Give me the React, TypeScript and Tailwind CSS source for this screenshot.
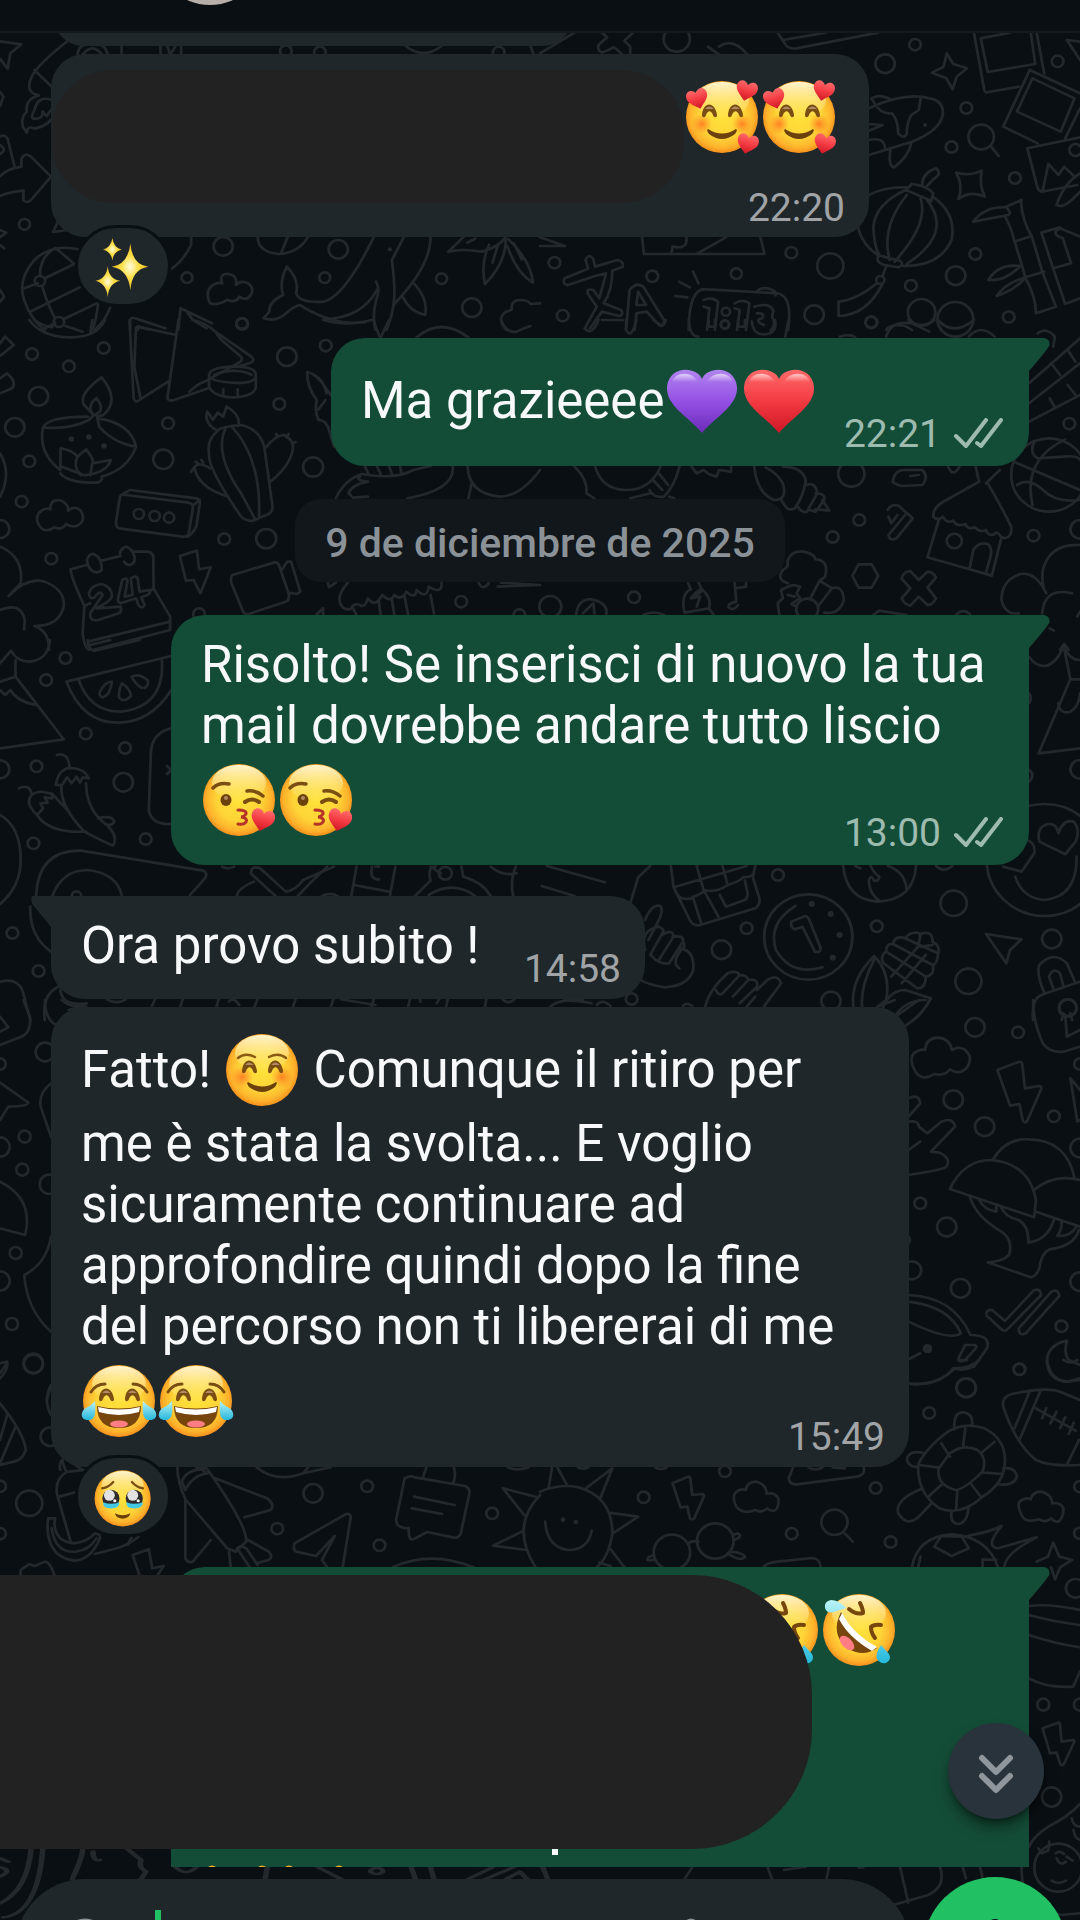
import type { ReactNode } from 'react';

/* ---------- Wallpaper ---------- */

type Doodle = { at: string; rings: [number, number, number][]; dots?: [number, number, number][]; lines: string[] };

const doodles: Doodle[] = [
  {
    at: 'translate(0 0) scale(.3444 .3333)',
    rings: [[71, 673, 16], [648, 739, 28], [982, 748, 28], [543, 833, 16], [943, 833, 16], [1282, 836, 16], [1370, 923, 28], [703, 970, 16], [830, 153, 17], [929, 157, 17], [1448, 157, 17], [116, 843, 15], [171, 966, 15]],
    dots: [[1132, 748, 6]],
    lines: [
      'M0 124 62 133 30 160 22 206 0 176',
      'M200 120Q100 200 88 240T112 286M100 210 160 270',
      'M112 286Q72 300 78 335Q60 350 66 380L78 398Q80 375 100 386Q130 380 148 360M150 300Q110 285 100 330Q90 350 95 355Q125 360 124 335L135 348 148 330',
      'M0 276 10 290 0 318M0 410Q20 400 24 424L42 498M0 435Q22 450 0 462',
      'M0 528Q25 505 62 500V478Q72 455 90 470L148 530 90 600Q78 612 68 600V572Q30 575 0 588',
      'M154 696 170 662 196 690ZM0 690 18 698 0 712M0 735 12 745M0 870 12 890 0 905',
      'M228 748Q150 730 100 780Q50 840 70 900T130 990M70 865 110 850M130 835 216 792Q180 760 160 744Q115 770 116 828M88 935 232 862M122 858Q140 920 160 955M120 990 160 970M184 958 285 908Q280 960 268 990M320 922Q305 965 275 990',
      'M225 164Q228 130 268 130T312 164M240 164Q268 126 296 164M353 138V164M466 138V164M486 138 494 164 510 138M526 138V164',
      'M1178 138Q1230 180 1282 138M1540 138 1550 164',
      'M555 712V735Q530 785 498 806M748 712Q750 760 815 762Q870 755 893 712M815 762 835 712',
      'M610 910Q595 880 612 860Q630 845 645 850Q635 820 663 822Q690 825 685 855Q700 840 720 850Q740 865 728 885Q715 905 695 890Q685 910 660 900Q630 918 610 910Z',
      'M833 800Q870 840 860 880Q870 910 940 905Q1000 890 1085 712M833 800Q810 845 822 885Q780 905 782 935L765 955Q800 965 825 945Q850 920 870 915Q970 980 1060 967M940 958Q1050 955 1095 870M1092 845Q1105 870 1092 900Q1080 950 1090 990M1172 712 1138 780Q1150 880 1142 915M1250 712Q1250 800 1142 915M1122 990Q1138 950 1142 918M1203 852Q1245 900 1234 945Q1190 935 1170 892',
      'M1302 755Q1340 745 1400 755Q1450 740 1468 712V735Q1460 800 1408 852Q1395 790 1420 735M1302 755 1345 712M1357 728 1380 716M1445 738 1430 788M1476 718Q1540 780 1548 848Q1500 820 1474 740M1492 730 1515 778',
      'M1470 990Q1440 955 1470 935Q1490 930 1485 925Q1485 900 1510 900Q1535 900 1540 912L1568 910M378 990V960Q382 950 392 955L480 985M400 990V980L430 988M518 990 524 925 615 970M540 932 560 960 600 985',
    ],
  },
  {
    at: 'translate(540 0) scale(.3444 .3333)',
    rings: [[397, 117, 38], [1002, 191, 28], [1089, 134, 17], [1503, 184, 17], [1238, 324, 17], [1195, 441, 17], [1281, 411, 37], [1379, 534, 17], [730, 758, 17], [843, 798, 38], [570, 821, 16], [326, 829, 17], [42, 788, 17], [66, 947, 17], [796, 944, 28], [962, 966, 17], [1264, 762, 17], [1207, 827, 28], [1077, 857, 17], [1108, 937, 40], [1206, 958, 52], [1361, 951, 17], [540, 935, 12], [537, 973, 12], [988, 840, 12], [1555, 450, 18]],
    dots: [[1118, 375, 6]],
    lines: [
      'M100 98 0 160M180 98 195 112 170 135Q165 150 180 158L215 142 238 162M270 98 245 122 262 140V160M487 140 520 164M520 140Q560 110 602 164',
      'M690 98 712 132Q720 148 745 145L982 98M705 120 830 98',
      'M1181 160 1200 192 1240 205 1210 230 1198 268 1180 235 1138 218 1172 200Z',
      'M1260 98 1290 270Q1292 280 1302 276L1390 260M1280 115 1300 216 1438 192 1425 98M1442 98 1464 220M1280 115 1365 98',
      'M1422 210 1568 280M1422 210 1345 380 1445 430M1430 235 1385 335 1512 395 1552 295ZM1568 325 1525 415M1415 445 1568 412M1415 445 1445 565Q1450 578 1465 574L1560 555M1460 570 1476 492 1505 525 1522 500 1552 530M1530 120 1568 180M1530 120 1568 125M1500 615Q1520 550 1568 520M1500 615Q1520 630 1568 575',
      'M1310 440 1332 468M955 325Q1060 275 1130 295Q1170 300 1170 340Q1165 390 1080 425L955 465M1105 297 1100 330 1078 345Q1065 370 1065 400Q1058 420 1040 400Q1040 360 1022 340Q985 345 963 295Q990 280 1020 300M955 372 995 375 955 392M955 420Q1000 410 1002 445M1018 445Q1010 500 1028 502Q1070 470 1078 430',
      'M1208 518Q1250 530 1282 512Q1275 560 1292 590Q1250 570 1215 597Q1230 555 1208 518Z',
      'M1080 552Q1120 555 1142 580L1135 605M1062 570 1080 552M1062 570 1135 602M1110 552Q1110 520 1150 505Q1170 520 1140 540L1120 562M955 585Q1000 560 1065 562M1140 590Q1210 640 1195 720Q1160 800 1055 798M955 585Q915 630 925 690Q940 740 985 768M1062 570Q975 610 968 680Q970 740 985 765M1065 585Q990 680 1015 780M1105 595Q1130 670 1030 785M1125 602Q1200 700 1065 792M985 765Q970 785 1000 795L1040 802Q1060 795 1045 782Q1010 775 985 765M1005 800 995 828M978 850Q920 900 867 905V948Q950 945 995 850',
      'M1258 665Q1290 620 1350 622L1398 600 1397 610Q1400 660 1428 710L1460 820 1498 920 1440 940Q1440 890 1410 835 1395 780 1378 725 1368 680 1350 650M1258 665 1360 645Q1370 640 1355 622M1378 725 1428 708M1410 832 1464 815M1456 698 1510 682M1456 698 1490 805 1525 912 1568 895M1490 805 1542 790 1518 715Q1480 700 1510 685L1568 710M1395 798Q1330 790 1302 840Q1350 845 1395 798M1410 832Q1350 850 1326 888Q1380 870 1410 832',
      'M296 712 302 762H652L640 712M382 755 385 740Q430 750 425 712M455 762 540 712',
      'M72 835 140 806 132 780Q140 760 154 775L160 800 225 780Q245 785 240 800L210 812Q210 870 185 910L235 930Q245 945 230 948L180 935 145 985M72 835Q62 850 80 856L160 828 192 820 172 895 155 870Q135 865 138 880L165 920 130 985M250 990 260 870Q280 845 300 860L360 960Q360 985 345 975L310 935 280 940 275 990M285 875 280 915 308 915Z',
      'M404 845 435 862M444 815 460 850M392 888 428 892M432 990Q432 860 485 868L690 880Q735 890 720 990M628 878Q640 858 670 868 688 875 684 886',
      'M475 900Q500 890 517 905L508 990M475 920 492 925 485 990M565 910Q590 895 608 910L598 990M565 925 580 930 572 990M622 920Q670 905 678 935 670 950 680 965 680 985 670 990M630 940Q655 938 645 955 625 960 640 970L650 975',
      'M0 712 72 738H0M1005 990Q1020 970 1060 978L1080 990',
    ],
  },
  {
    at: 'translate(0 320) scale(.3444 .3333)',
    rings: [[93, 102, 17], [200, 139, 17], [301, 84, 17], [112, 229, 28], [43, 322, 28], [85, 424, 17], [703, 12, 17], [833, 110, 28], [946, 77, 17], [811, 252, 17], [488, 310, 17], [474, 418, 29], [909, 441, 29], [63, 545, 17], [0, 627, 27], [149, 716, 17], [651, 657, 17], [773, 656, 29], [1339, 845, 17], [403, 582, 15], [449, 588, 15], [491, 593, 15], [1508, 885, 17], [578, 882, 17]],
    dots: [[207, 357, 8], [258, 351, 8], [302, 378, 8]],
    lines: [
      'M85 0Q120 50 200 52T305 0M100 0Q130 20 150 22L160 8M190 18 240 35M268 0 262 40',
      'M0 70 15 50 40 75 0 108M0 175 20 160Q50 185 35 205L0 220M0 400Q35 460 0 530',
      'M242 252Q230 220 295 172Q350 240 300 285L282 290 288 320Q330 370 395 380M242 252 272 285 258 300Q200 330 125 322Q140 290 255 290M272 285Q250 260 280 234Q300 260 290 275L275 285M285 295Q380 310 395 380Q370 450 295 470Q300 480 285 488Q200 490 175 460M125 322Q110 400 175 450L176 385Q210 390 225 410L250 388Q275 420 268 430L322 420Q310 460 245 466L180 440M225 410Q210 440 235 466M268 430 262 466',
      'M376 0 388 235Q392 250 405 240L488 185M395 22 390 140 408 235M518 0 486 235Q490 245 505 240L605 205M400 20 512 45M560 0Q600 10 625 35L730 110Q742 120 728 128L690 140M625 35Q640 60 660 75L700 110Q708 122 690 130L600 182Q575 190 550 215',
      'M607 165Q610 142 676 140T743 165 676 188 607 165V200Q620 230 676 232 740 230 743 200V165M648 225V208M690 225V208M622 165Q640 155 676 152 720 155 730 165',
      'M632 332Q590 310 602 275L618 300 632 278 648 290 658 260Q700 285 692 318M632 332Q600 360 607 400 600 440 700 590Q715 605 735 602L780 582Q795 575 790 550L770 400Q765 330 700 315 640 320 632 332M655 325Q620 400 700 520L742 600M675 322Q760 420 752 595M770 385Q800 345 825 345 855 360 850 390 840 440 785 485M805 352 802 342M832 352 838 342M850 370 858 366M662 530Q570 500 565 440 580 425 610 445M565 440 555 455M575 430 568 425M590 428 585 420',
      'M120 625Q100 600 112 580 130 560 146 568 145 540 170 540 198 545 198 572 215 555 235 572 250 600 228 615 210 625 192 612 180 632 158 622 135 638 120 625Z',
      'M348 532Q350 522 365 525L548 548Q562 552 560 565L548 640Q545 652 530 650L345 625Q335 620 337 605ZM352 525 378 510 570 535Q582 540 580 552L570 620Q560 640 545 650M562 555 580 540',
      'M522 708 572 692 578 748 612 742 582 820 562 780 540 782Z',
      'M675 765 795 728Q805 725 810 735L838 820Q842 840 830 845L722 882Q712 885 706 875L672 790Q668 770 675 765M818 750 834 725 845 725 872 815 862 822 838 818',
      'M252 720Q260 700 272 702 298 715 295 750 280 765 265 750 255 740 252 720M348 700Q355 680 368 680 395 695 390 725 375 745 360 725M252 735 205 748Q205 770 245 858L240 940Q245 985 260 990M295 722 350 708M388 695H430Q448 700 445 720L446 805 494 890V930L270 990M255 965 494 905M245 858 262 850M440 810 446 805',
      'M258 820Q265 795 295 792 325 800 325 830 320 845 280 865L350 860Q355 875 345 880L285 900Q260 905 262 880L298 825Q290 808 275 832 260 840 258 820M355 780Q370 770 370 785L362 830 385 825 380 775Q395 765 400 775L405 815 435 810Q440 825 410 832L420 855Q412 870 402 855L395 835 350 850Q338 845 344 830Z',
      'M0 680Q70 710 60 790L25 828Q80 770 130 785 190 810 185 860 170 920 100 918 145 935 142 990M0 870Q60 845 72 900L70 928',
      'M960 225Q920 160 892 156 890 200 920 240 912 270 925 300 950 300 958 340L970 380M912 165Q940 180 948 220M925 268 945 240',
      'M975 535Q1000 480 1050 462 1150 480 1200 450L1250 438M1068 485Q1030 480 1045 470M1068 485Q1020 495 1012 520L1025 533 1068 530M1183 535Q1320 510 1315 440M1358 440Q1360 520 1450 530 1510 530 1568 450M1370 488 1360 535M1060 440 1070 462M1095 440 1105 462M1130 440 1138 462M1162 440 1166 462',
      'M1210 52Q1280-10 1360 52M1085 0Q1100 50 1105 52L1130 0M940 0Q1000 20 1080 0M1455 0Q1470 40 1500 35 1520 25 1540 18',
      'M952 788 955 802 975 788M1010 788Q975 830 990 855 1005 875 1020 865 1030 845 1050 858 1062 860 1068 835 1085 860 1100 840L1110 825Q1135 850 1145 825 1160 840 1175 825L1180 815Q1205 840 1210 810 1240 840 1245 800 1285 825 1282 788M1025 865 1035 885M1100 845 1105 885M1138 840 1145 885M1175 830 1185 885M1250 825 1260 880M1390 788Q1400 815 1420 788M1445 800 1568 795 1455 788M918 885 938 865V885',
    ],
  },
  {
    at: 'translate(540 320) scale(.3444 .3333)',
    rings: [[1537, 311, 17], [904, 462, 38], [927, 600, 17], [850, 651, 17], [1203, 663, 22], [1433, 647, 17], [273, 832, 17], [30, 860, 32], [1568, 628, 28], [776, 868, 32], [962, 8, 17], [1478, 465, 110], [537, 14, 12]],
    lines: [
      'M1420 190 1568 55M1420 250 1568 130M1420 305 1568 225M1488 135 1510 165M1532 90 1555 125M1480 235 1495 262M1532 195 1555 225M1420 100 1438 70M1445 40Q1470 20 1495 50L1490 80',
      'M1435 365Q1420 400 1445 415L1520 410Q1560 405 1568 420M1375 425 1568 510M1525 358Q1400 420 1430 555M1385 495Q1420 470 1460 510T1568 540',
      'M1300 490Q1340 560 1368 620 1372 650 1350 655L1338 650Q1325 630 1320 642 1300 650 1295 630 1280 640 1262 622 1240 630 1235 612 1210 622 1200 602 1180 612 1170 590 1155 605 1142 590 1140 560 1180 540L1275 485 1265 440M1295 490 1335 450M1158 600 1125 712 1312 767 1340 652M1248 742 1258 690Q1275 665 1300 672 1315 685 1308 710L1295 758',
      'M1010 570Q1020 550 1042 558L1082 595 1035 655Q1015 665 1012 645L1060 585M1012 590 1020 610 1038 585',
      'M622 440Q630 520 680 540 720 540 705 490 690 460 655 442M705 440Q760 440 772 480 765 530 740 565 720 575 710 555L700 540M772 495Q800 485 805 520L775 575Q760 580 748 560M800 520Q830 520 825 540L800 575 782 570M820 540 840 572 800 568',
      'M440 440 455 460 475 450 490 462 512 470 520 450 555 455V440M160 440Q180 510 250 510 320 510 350 440M405 440Q390 500 360 530 330 535 318 510M328 480 355 510M345 460 372 495M100 440Q140 480 135 520L158 535M262 535 320 520M375 530 390 535',
      'M1025 480Q1030 450 1060 450H1110Q1130 470 1110 495L1050 498Q1020 490 1025 480M1075 468 1100 465M1185 440Q1200 475 1218 440',
      'M720 790Q685 780 705 750 725 740 718 725 730 690 765 695 795 700 800 718 840 720 828 770L812 782 785 835M812 782 848 805 808 858M848 805Q880 795 882 840 870 885 825 878M700 810 720 800 735 795 755 800 745 820 755 835 730 852 745 860M700 810 705 835 690 850 695 885M720 825 740 830',
      'M925 733H963L982 768 963 803H925L907 768ZM1075 753 1100 780 1125 755Q1140 755 1150 772L1125 803 1150 835Q1140 855 1125 855L1100 830 1075 857Q1055 850 1050 835L1075 805 1050 775Q1055 755 1075 753Z',
      'M430 790 438 808Q410 820 418 870L420 878 492 865M460 788 470 808Q500 835 490 865L505 885M438 835Q465 800 468 815L440 835 465 830 455 860M565 788 570 845Q545 850 548 862 560 875 575 855M570 805 598 800V788M105 885Q110 835 150 838 200 850 192 885M125 880 155 850 158 880M300 885Q330 870 360 885M968 885 985 872 1065 885M1210 882Q1230 865 1248 882',
      'M1568 675Q1480 670 1460 750 1455 800 1470 820 1440 755 1395 762 1340 780 1340 840 1350 885 1390 880M1545 820Q1465 800 1458 880M1560 890 1568 875M1480 925 1492 932M1510 990 1522 972 1535 990',
      'M432 0Q435 50 460 50M712 50 722 0M490 0V20H508V0M575 0V20H595V0M615 5Q620 50 660 42 690 35 682 0M130 25Q150 50 170 0M180 0H240M250 0V30Q265 60 280 0M330 0Q360 30 365 0M1005 50Q1020 0 1080 10L1130 35M870 50Q900 40 915 52M1070 0Q1110 30 1145 0M1155 0Q1200 50 1260 0M1245 50Q1280 10 1320 50',
    ],
  },
  {
    at: 'translate(0 640) scale(.3444 .3333)',
    rings: [[190, 54, 17], [134, 120, 17], [249, 281, 17], [363, 324, 17], [106, 379, 17], [0, 388, 27], [358, 427, 28], [97, 610, 17], [423, 597, 17], [36, 879, 17], [112, 993, 17], [222, 768, 14], [1293, 700, 19]],
    lines: [
      'M145 0Q140 60 85 65 50 65 32 32L0 70M45 60V110L0 125M45 110 185 298 0 325M0 150 15 165 30 150Q50 185 105 195M255 0Q255 30 275 32L405 0M262 15 320 0',
      'M193 125 497 48M193 125Q240 250 345 248 440 245 497 150M228 118Q260 215 350 215 480 200 470 58M290 155Q305 125 325 125 320 165 300 172 285 170 290 155M355 130Q380 150 380 168 360 190 345 172 345 145 355 130M382 110Q405 98 430 122 430 145 412 144 395 135 382 110',
      'M497 265Q440 280 438 340L432 510Q440 555 497 552M485 378 497 390 485 402',
      'M165 345Q200 335 202 385M162 435Q170 385 205 384 245 385 258 415L240 412 232 428 222 410 208 430 195 412 180 435ZM178 440Q175 500 245 575 290 600 328 617 345 590 310 555 250 510 250 430M285 535Q325 525 332 545 325 560 305 552M55 445Q85 430 92 462M108 525Q70 490 92 465 110 450 135 458 155 460 152 475L130 472 138 488 118 490 125 505ZM108 525Q140 580 250 575M150 460 200 515',
      'M0 525Q60 560 60 660 60 740 0 792M105 768Q110 630 235 632L590 692Q605 700 595 715L552 765M152 768Q180 690 255 690 340 700 354 768M88 800Q85 890 148 935M0 1025Q60 1010 70 1070L88 1140M130 1140Q120 1060 175 1038M175 1050Q180 1100 250 1090M200 1110Q230 1100 250 1100',
      'M728 700Q730 675 755 685L830 755 Q860 750 880 720L970 680M728 700 800 768M738 725Q690 745 688 768M865 768 900 730 950 680M1035 680 1020 768M1028 735 1130 755M1148 680 1132 768M1080 680Q1072 720 1100 718M1100 680H1090M1205 768 1250 722Q1240 680 1265 680M1340 680 1345 710Q1400 725 1425 768M1245 765Q1315 720 1380 768M1425 680Q1460 710 1500 700M1498 680Q1480 720 1490 768M1250 680 1280 700M935 768Q958 755 980 768M645 680Q660 690 680 680',
      'M450 1078 440 1102M530 1078 523 1102M635 1078 628 1102M748 1078 738 1102M858 1078 850 1102M968 1078 960 1102M1085 1078 1078 1102M1190 1078 1185 1102M1300 1078 1295 1102M1412 1078 1408 1102M665 1085Q680 1070 695 1095M310 1078Q340 1095 365 1078M990 1078 1090 1095M1460 1078Q1475 1095 1495 1078M1220 1078V1085M1275 1078 1268 1090',
    ],
  },
  {
    at: 'translate(540 640) scale(.3444 .3333)',
    rings: [[691, 705, 17], [600, 865, 17], [527, 929, 28], [779, 891, 128], [978, 859, 17], [1201, 790, 38], [1486, 897, 28], [1244, 1024, 38], [845, 1083, 28], [266, 1077, 17], [1568, 388, 28], [1533, 1103, 25], [1465, 660, 168]],
    dots: [[789, 792, 9], [844, 822, 9], [870, 885, 9], [850, 953, 9]],
    lines: [
      'M742 798Q660 850 685 930 730 1010 820 982M730 845 770 828Q778 830 782 840L815 925Q815 940 798 935L762 860 740 868Q725 860 730 845Z',
      'M380 678 388 742 435 840Q445 860 465 855L625 805Q640 795 637 775L618 712 625 678M388 742 600 678M412 775Q440 780 445 770 475 760 475 750 510 760 545 735M412 775Q400 770 388 742M455 678 475 750 518 830M445 775 468 850M545 735Q580 725 590 712 615 712 620 700M530 678 545 735M522 765 540 800 595 780Q608 770 600 745L595 722',
      'M20 678 188 727M5 738 100 768M320 678 285 712 262 790M880 678Q890 780 980 785 1085 780 1092 678M960 678Q970 700 985 710 985 725 970 722 960 700 955 722 955 760 985 782M1010 678Q1060 695 1065 750M915 678 930 685M1150 678Q1170 700 1198 678',
      'M305 840Q325 790 350 798 360 815 340 850L315 900M305 930Q290 870 345 860 365 870 355 880L320 945M355 885Q385 865 388 890L345 960M385 890Q420 885 415 905L375 970Q345 975 322 945M415 905Q425 920 410 930 380 970 405 985M405 925Q450 930 445 990 430 1040 360 1042 300 1030 292 1018',
      'M480 1100Q490 1050 545 1000 570 990 580 1005 600 1005 605 1020L560 1070M580 1005 530 1060Q520 1070 510 1050M605 1020Q635 1015 630 1040L580 1090M630 1050 660 1020Q690 1000 700 1030L650 1100M600 1100 625 1070',
      'M910 1100Q900 1020 970 948 1020 1000 1005 1080L980 1100M935 1100Q930 1040 970 960M998 970Q985 950 1005 935 1005 910 1025 912 1030 885 1060 895 1080 870 1105 882 1140 870 1140 905 1165 920 1155 945 1155 970 1140 975 1148 1005 1120 1010 1120 1045 1095 1045M1005 935 1120 1010M1025 912 1140 975M1060 895 1155 940M998 970 1095 1045M1105 882 1098 920 1020 1010M1140 915 1105 920M1120 945 1050 1030M990 1120Q1010 1050 1060 1050L1135 1075Q1110 1120 1085 1140M1030 1130Q1060 1080 1120 1080',
      'M1295 882 1398 898 1365 930 1354 970ZM1465 1060Q1440 1000 1450 975 1490 930 1530 970L1555 1030M1492 1050 1478 1010Q1490 980 1510 1000L1520 1040M1568 1025 1455 1065Q1425 1080 1432 1140M1515 1140 1520 1120M1545 1140 1540 1120',
      'M1420 50Q1440 80 1470 78 1505 65 1520 15 1535 60 1568 60M1520 15 1540 118 1448 340 1568 325M1540 118H1568M1505 190Q1510 225 1540 215 1565 200 1568 160M1420 160Q1430 175 1420 190M1420 390Q1440 405 1420 425',
      'M1450 605Q1440 560 1475 552 1500 550 1505 580 1520 535 1550 545 1570 570 1555 605L1525 643ZM1380 710Q1400 775 1465 780 1560 770 1558 650M1415 600Q1440 610 1435 640L1398 695 1345 680',
      'M30 1100Q60 1070 150 1090M165 1095Q180 1075 205 1098M415 1098Q425 1085 442 1098M70 1080H125',
    ],
  },
  {
    at: 'translate(540 1000) scale(.3444 .3333)',
    rings: [[1263, 82, 28], [1388, 97, 17], [1200, 299, 28], [1291, 380, 28], [1492, 349, 17], [1104, 610, 17], [1181, 681, 28], [1221, 865, 28], [1514, 979, 17], [1392, 1108, 17], [1238, 1164, 28], [1568, 444, 28], [1568, 845, 28], [1080, 811, 27], [1532, 24, 26], [1568, 192, 17]],
    dots: [[1125, 1046, 14]],
    lines: [
      'M1090 215Q1070 180 1085 160 1105 145 1118 150 1120 115 1155 113 1190 115 1196 150 1230 130 1248 170 1250 205 1222 215 1205 220 1190 208 1175 230 1145 222 1110 245 1090 215Z',
      'M1328 210 1392 185Q1398 185 1400 190L1408 265 1448 258Q1458 258 1455 268L1415 362Q1408 372 1402 362L1392 312 1365 317Z',
      'M1070 295Q1100 280 1104 310L1070 350M1070 365Q1100 360 1100 380L1125 400 1165 365Q1200 350 1205 380L1135 455 1160 458Q1195 475 1180 500 1170 510 1070 525M1070 450 1104 425M1070 710Q1078 718 1070 730',
      'M1190 567Q1230 480 1310 480 1420 490 1440 600L1435 652ZM1315 480Q1350 415 1420 418 1530 420 1552 535M1435 570Q1490 520 1568 540M1440 635 1568 680M1248 590Q1265 650 1340 695 1375 720 1362 765 1345 785 1300 787L1425 832Q1440 830 1450 805 1455 760 1480 748 1550 740 1565 690M1275 600Q1290 630 1325 635V615M1338 620Q1350 650 1390 660 1420 680 1418 728 1475 720 1492 660M1515 665Q1515 690 1502 708 1540 710 1558 680M1540 235 1568 270M1540 235 1560 365 1568 360',
      'M1295 940Q1305 920 1322 938L1350 963 1435 870Q1455 865 1455 885L1360 985Q1350 998 1340 988L1298 948M1390 985 1485 875Q1505 865 1508 888L1410 1000Q1390 1010 1390 985Z',
      'M1530 1022Q1470 1035 1472 1090 1480 1145 1535 1145L1568 1135M1530 1022Q1520 1060 1535 1080L1568 1095M1070 885Q1200 890 1250 1005 1310 1005 1298 1045L1260 1100Q1230 1115 1200 1105 1160 1160 1070 1152M1070 905Q1190 920 1222 1000 1190 1025 1070 965M1235 1035H1262Q1270 1038 1265 1045L1235 1080Q1215 1090 1215 1075ZM1070 1078 1104 1060',
      'M1432 0Q1430 60 1460 130 1480 160 1520 155L1568 140M1525 45 1530 110 1568 90M980 20 1030 0M1035 48 1100 0M1060 78Q1110 45 1132 0',
    ],
  },
  {
    at: 'translate(0 1000) scale(.3333 .3333)',
    rings: [[0, 192, 17], [74, 410, 18], [67, 509, 18], [47, 759, 18], [0, 843, 29], [36, 972, 18], [100, 1090, 29], [135, 156, 28], [0, 441, 29], [148, 553, 29]],
    lines: [
      'M70 0 90 50Q95 100 60 112L0 135M0 50 25 82 0 95M135 0Q135 60 170 75M0 248 85 308Q85 318 25 320L0 360M153 250Q115 280 122 320L153 410M0 545Q90 590 80 680L75 705 0 685M153 710Q140 790 73 825 80 930 153 995M0 1090 22 1085Q25 1110 0 1135M140 1200 152 1160M185 0Q220 30 260 10',
    ],
  },
  {
    at: 'translate(0 1360) scale(.3444 .3333)',
    rings: [[97, 12, 28], [85, 430, 38], [0, 379, 17], [0, 521, 17], [805, 506, 17], [909, 400, 28], [1066, 379, 17], [1102, 556, 17], [1429, 460, 17], [146, 230, 28]],
    lines: [
      'M0 130Q70 220 75 270 65 300 40 305L0 315M22 160 0 240M45 200 0 310M148 75Q125 120 148 165M20 10 0 40',
      'M175 330Q170 300 190 295L240 330M190 330 180 300M195 335Q160 355 165 400L205 545M172 410 218 397M245 330 200 335',
      'M140 475H160L158 490Q160 545 215 550 255 545 275 520 292 520 290 535 265 600 215 602 135 590 138 490ZM150 505Q160 580 220 575 260 570 280 535M275 582 340 565Q380 550 402 530M370 555 382 532',
      'M60 645V630L85 612 100 618 130 605Q145 605 158 645M405 645 385 585 432 568 442 625 475 618 458 645',
      'M515 322Q515 370 540 420L660 565 685 575 715 545Q720 500 600 325L570 322M528 365Q540 330 585 328L602 340Q560 345 538 390ZM625 355 775 415Q800 435 785 450L710 472M538 420V595Q545 610 560 605L612 540M665 575 670 622M695 575 725 622M715 565 748 615M720 540 780 575Q795 590 780 600L745 610M685 575Q690 550 715 565',
      'M745 322Q800 370 880 340L960 322M880 340 895 322M855 550 1005 462Q1020 460 1018 475L995 622M855 550Q850 570 860 575L918 588 972 528 935 600 950 622',
      'M1175 355Q1190 345 1205 352L1350 378Q1365 385 1363 400L1338 520Q1332 535 1318 533L1240 516 1200 538Q1185 542 1187 505 1150 505 1150 480ZM1202 410 1320 435M1196 445 1284 462M1228 352 1238 322M1315 372Q1325 350 1318 322M1140 622Q1250 570 1375 622M1460 385 1560 412M1460 385 1522 465M1432 557 1515 515M1432 557 1528 570M1568 405Q1480 500 1555 622',
      'M1475 322Q1500 335 1535 322',
    ],
  },
  {
    at: 'translate(540 1360) scale(.3444 .3333)',
    rings: [[301, 412, 17], [537, 334, 17], [975, 384, 17], [731, 521, 17], [1018, 546, 17], [1130, 159, 17], [1237, 83, 28], [1392, 28, 17], [855, 487, 38], [383, 577, 53], [509, 543, 53], [1555, 685, 28], [1568, 380, 17], [1568, 520, 17]],
    dots: [[67, 479, 7], [104, 486, 7]],
    lines: [
      'M0 395Q60 370 110 382 210 410 210 520 200 590 165 622M25 385 35 322M80 378 50 322M130 388 210 325 175 415M200 458 285 470 215 518M205 568 245 622M172 608 205 618M15 485Q20 560 80 570 140 570 150 512',
      'M385 370 430 350Q436 350 437 358L442 405 472 402Q478 405 475 412L448 475Q440 482 435 475L428 440 408 442ZM430 550Q445 540 460 545M560 525 575 520Q590 530 565 540M552 575Q595 580 595 592 580 605 545 580M332 585 315 592Q305 605 330 600M880 515 908 545',
      'M570 440Q555 410 570 395 585 385 598 390 600 365 630 365 658 375 658 402 680 395 692 415 695 445 680 452 670 455 660 445 645 460 625 450 590 465 570 440ZM1400 468Q1385 440 1392 425 1410 410 1425 418 1430 395 1455 395 1485 402 1488 430 1510 425 1520 445 1520 475 1505 485 1490 485 1485 475 1465 490 1450 478 1410 490 1400 468Z',
      'M735 322 722 355Q725 375 745 373L920 350Q945 345 940 322M780 322Q800 335 820 322M850 322 885 325M110 322Q125 330 140 322M335 322Q350 332 368 322M650 620Q660 608 690 605L790 594Q812 595 815 620',
      'M1203 208Q1200 155 1230 157 1258 160 1255 197M1110 278Q1070 270 1065 300 1075 325 1098 320M1105 388Q1030 420 1040 460 1065 500 1095 475L1135 432M1195 455Q1190 490 1215 492 1240 490 1245 440M1345 325Q1380 320 1385 350 1375 380 1330 372M1165 230Q1220 180 1290 205 1350 235 1350 300 1350 370 1285 410 1220 470 1160 445 1095 400 1098 315 1110 280 1165 230M1190 280Q1230 250 1270 270 1300 295 1285 335 1220 400 1200 388 1150 370 1158 325ZM1235 205 1228 262M1320 245 1280 280M1165 250 1190 290M1100 315 1155 322M1345 342 1288 338M1130 408 1165 375M1208 450 1212 390M1278 408 1250 370',
      'M1345 140Q1340 110 1370 102 1470 80 1510 95L1568 120M1345 140Q1380 250 1440 300 1480 320 1568 315M1420 98 1378 205M1452 95 1392 240M1440 145 1555 212M1470 145 1458 175M1500 155 1482 190M1525 172 1510 205M1550 188 1535 222M1532 310 1565 240M1472 0Q1480 60 1530 65L1568 60M1520 0Q1540 15 1560 0M1070 70Q1150 80 1205 25 1250 25 1275 0M1215 0H1240',
      'M1080 622Q1095 530 1195 523 1300 530 1330 622M1145 560 1165 528 1225 530 1245 565 1195 588ZM1098 622 1105 590M1325 600 1285 598V622M1240 528Q1310 515 1340 498 1290 560 1330 565L1442 532Q1350 580 1348 622M1490 548 1508 590 1545 600 1510 622 1496 658 1484 622M1442 605 1475 590 1490 548M1420 738Q1480 730 1568 750M1420 765Q1490 785 1568 795M1420 825Q1490 850 1568 862',
    ],
  },
  {
    at: 'translate(680 1560) scale(.3333 .3333)',
    rings: [[1090, 434, 18], [1115, 711, 29], [1200, 434, 18], [1135, 923, 72]],
    lines: [
      'M1047 355Q1100 385 1180 380L1200 335M1088 505 1135 488Q1140 488 1140 495L1145 545 1180 540Q1185 542 1182 548L1152 612Q1145 620 1140 610L1130 578 1110 580Z',
      'M1047 860Q1060 830 1105 800 1165 770 1200 732M1175 775Q1180 800 1200 800M1180 810Q1185 835 1200 840M1075 865 1085 880 1105 872 1108 845M1128 880Q1140 870 1152 882M1130 895Q1140 920 1158 905M1160 890 1178 902M1115 962Q1135 975 1158 962M1025 920Q1025 1010 1060 1030L1140 1065 1200 1060',
      'M15 955 38 920M262 920 275 955M312 930 378 920M440 955 447 920M660 920 685 1028M780 920Q800 980 745 1005L640 1035M848 920 858 955M900 920 908 955M535 922H550',
    ],
  },
  {
    at: 'translate(0 1780) scale(.6888 .3333)',
    rings: [[547, 273, 9]],
    lines: ['M0 235 12 245M0 290Q20 270 0 262M45 207Q40 330 0 370M62 207Q55 400 5 412M135 215Q135 245 145 240M120 207Q120 230 105 297M185 207 205 240Q200 260 212 275L205 297M255 262Q270 290 285 262M388 262 385 297M462 262 495 297M597 262 603 297M625 262 630 297M680 297 715 262M705 297 745 262M735 297 755 275 765 297M788 262 795 297'],
  },
];

function Wallpaper() {
  return (
    <svg
      aria-hidden="true"
      viewBox="0 0 1080 1920"
      preserveAspectRatio="xMidYMid slice"
      className="absolute inset-0 h-full w-full"
      fill="none"
      stroke="#23282c"
      strokeWidth="8"
      strokeLinecap="round"
      strokeLinejoin="round"
    >
      {doodles.map((d) => (
        <g key={d.at} transform={d.at}>
          {d.rings.map(([x, y, r], i) => (
            <circle key={i} cx={x} cy={y} r={r} />
          ))}
          {d.dots?.map(([x, y, r], i) => (
            <circle key={i} cx={x} cy={y} r={r} fill="#23282c" stroke="none" />
          ))}
          {d.lines.map((p, i) => (
            <path key={i} d={p} />
          ))}
        </g>
      ))}
    </svg>
  );
}

/* ---------- Emoji ---------- */

const heart = 'M0 -5C-3 -12-13 -12-14 -3C-15 5-6 10 0 16C6 10 15 5 14 -3C13 -12 3 -12 0 -5Z';
const bigHeart = 'M38 17C33 4 5 3 3 25C2 44 25 55 38 71C51 55 74 44 73 25C71 3 43 4 38 17Z';

function Gradients() {
  return (
    <svg aria-hidden="true" className="absolute h-0 w-0">
      <defs>
        <radialGradient id="face" cx=".5" cy=".48" r=".52">
          <stop offset="0" stopColor="#ffe23a" />
          <stop offset=".6" stopColor="#fed437" />
          <stop offset=".86" stopColor="#fdb32c" />
          <stop offset="1" stopColor="#f58f1c" />
        </radialGradient>
        <linearGradient id="shine" x1="0" y1="0" x2="0" y2="1">
          <stop offset="0" stopColor="#fff8d8" stopOpacity=".95" />
          <stop offset="1" stopColor="#ffe873" stopOpacity=".15" />
        </linearGradient>
        <radialGradient id="blush">
          <stop offset="0" stopColor="#ff6d1f" stopOpacity=".8" />
          <stop offset="1" stopColor="#ff7d1f" stopOpacity="0" />
        </radialGradient>
        <linearGradient id="red" x1="0" y1="0" x2="0" y2="1">
          <stop offset="0" stopColor="#ff6a6a" />
          <stop offset=".5" stopColor="#f33a42" />
          <stop offset="1" stopColor="#cf1826" />
        </linearGradient>
        <linearGradient id="violet" x1="0" y1="0" x2="0" y2="1">
          <stop offset="0" stopColor="#b184ee" />
          <stop offset=".5" stopColor="#9450e4" />
          <stop offset="1" stopColor="#6c2bb8" />
        </linearGradient>
        <linearGradient id="gloss" x1="0" y1="0" x2="0" y2="1">
          <stop offset="0" stopColor="#fff" stopOpacity=".65" />
          <stop offset="1" stopColor="#fff" stopOpacity="0" />
        </linearGradient>
        <linearGradient id="tear" x1="0" y1="0" x2="0" y2="1">
          <stop offset="0" stopColor="#b9f3f7" />
          <stop offset="1" stopColor="#25b8dc" />
        </linearGradient>
        <radialGradient id="gold">
          <stop offset="0" stopColor="#fffbe0" />
          <stop offset=".45" stopColor="#fee04a" />
          <stop offset="1" stopColor="#e8b520" />
        </radialGradient>
      </defs>
    </svg>
  );
}

function Glyph({ label, children, small }: { label: string; children: ReactNode; small?: boolean }) {
  return (
    <svg
      role="img"
      aria-label={label}
      viewBox="0 0 77 77"
      className={small ? 'h-[60px] w-[60px]' : 'mt-[5px] mb-[5px] inline-block h-[77px] w-[77px] align-[-26px]'}
    >
      {children}
    </svg>
  );
}

function Face() {
  return (
    <>
      <circle cx="38" cy="39" r="36" fill="url(#face)" />
      <ellipse cx="38" cy="22" rx="27" ry="18" fill="url(#shine)" />
    </>
  );
}

function HappyEyes({ y = 35 }: { y?: number }) {
  return (
    <g transform={`translate(0 ${y})`} fill="#7a4d12">
      <path d="M18 0C19-14 31-14 33 0C33 3 30 3 29 0C27-5 24-5 22 0C21 3 18 3 18 0Z" />
      <path d="M44 0C45-14 57-14 59 0C59 3 56 3 55 0C53-5 50-5 48 0C47 3 44 3 44 0Z" />
      <path d="M21-6Q25-11 30-6ZM47-6Q51-11 56-6Z" fill="#b08a66" />
    </g>
  );
}

const smile = 'M24 51Q38 60 52 51Q54 52 51 56Q38 66 25 56Q22 52 24 51Z';

function InLove() {
  return (
    <Glyph label="🥰">
      <Face />
      <circle cx="18" cy="46" r="10" fill="url(#blush)" />
      <circle cx="58" cy="46" r="10" fill="url(#blush)" />
      <HappyEyes y={37} />
      <path d={smile} fill="#6b410c" />
      <g fill="url(#red)">
        <path d={heart} transform="translate(13 19) rotate(-16) scale(.76)" />
        <path d={heart} transform="translate(63 11) rotate(14) scale(.76)" />
        <path d={heart} transform="translate(64 64) rotate(14) scale(.76)" />
      </g>
    </Glyph>
  );
}

function Smiling() {
  return (
    <Glyph label="☺️">
      <Face />
      <circle cx="18" cy="46" r="11" fill="url(#blush)" />
      <circle cx="58" cy="46" r="11" fill="url(#blush)" />
      <path d="M14 27Q21 21 31 26M45 26Q55 21 62 27" fill="none" stroke="#8a5a14" strokeWidth="2.500" strokeLinecap="round" />
      <HappyEyes y={40} />
      <path d={smile} fill="#6b410c" />
    </Glyph>
  );
}

function Kiss() {
  return (
    <Glyph label="😘">
      <Face />
      <path d="M12 27Q18 21 28 23M46 30Q55 29 62 35" fill="none" stroke="#7a4d12" strokeWidth="3.500" strokeLinecap="round" />
      <ellipse cx="25" cy="39" rx="5.500" ry="6" fill="#6b410c" />
      <circle cx="25" cy="37" r="2" fill="#b08a66" />
      <path d="M44 41Q51 36 58 41" fill="none" stroke="#7a4d12" strokeWidth="4" strokeLinecap="round" />
      <path d="M37 49Q46 49 45 53Q43 56 40 56Q47 57 45 61Q43 64 37 63" fill="none" stroke="#b5342a" strokeWidth="3" strokeLinecap="round" />
      <path d={heart} transform="translate(62 57) rotate(14) scale(.84)" fill="url(#red)" />
    </Glyph>
  );
}

function Joy() {
  return (
    <Glyph label="😂">
      <Face />
      <path d="M10 30Q15 22 24 22M52 22Q61 22 66 30" fill="none" stroke="#7a4d12" strokeWidth="3" strokeLinecap="round" />
      <HappyEyes y={37} />
      <path d="M16 44Q38 49 60 44Q60 66 38 66T16 44Z" fill="#76460c" />
      <path d="M17 45Q38 50 59 45L58 50Q38 56 18 50Z" fill="#fff" />
      <ellipse cx="38" cy="62" rx="9" ry="3.500" fill="#ff7d83" />
      <path d="M14 39C15 52 14 58 7 58C-2 58 0 48 5 46Q10 44 14 39ZM62 39C61 52 62 58 69 58C78 58 76 48 71 46Q66 44 62 39Z" fill="url(#tear)" />
    </Glyph>
  );
}

function Rofl() {
  return (
    <Glyph label="🤣">
      <Face />
      <path d="M28 18Q35 24 42 22Q42 18 39 12M60 34Q53 33 50 36Q50 42 54 47" fill="none" stroke="#76460c" strokeWidth="4" strokeLinecap="round" strokeLinejoin="round" />
      <path d="M20 21Q32 44 56 57Q42 67 26 57Q9 43 20 21Z" fill="#76460c" />
      <path d="M21 22Q32 43 56 56L51 60Q27 46 18 28Z" fill="#fff" />
      <ellipse cx="26" cy="52" rx="9" ry="5" transform="rotate(45 26 52)" fill="#ff7d83" />
      <path d="M25 17Q18 9 10 9Q3 10 4 17Q6 23 13 21ZM60 54Q54 63 56 68Q59 73 65 72Q71 69 68 63Z" fill="url(#tear)" />
    </Glyph>
  );
}

function Heart({ tone }: { tone: 'red' | 'violet' }) {
  return (
    <Glyph label={tone === 'red' ? '❤️' : '💜'}>
      {tone === 'red' ? <path d={bigHeart} fill="url(#red)" /> : <path d={bigHeart} fill="url(#violet)" />}
      <path d="M8 20C11 9 29 9 34 20ZM43 20C48 9 66 9 69 20Z" fill="url(#gloss)" />
    </Glyph>
  );
}

function RaisedHands() {
  return (
    <Glyph label="🙌">
      <path d="M8 4Q13-1 18 4L26 60H6ZM58 4Q63-1 68 4L70 60H50Z" fill="#fdb32c" />
    </Glyph>
  );
}

function Sparkles() {
  return (
    <Glyph label="✨" small>
      <g fill="url(#gold)">
        <path d="M48 7Q50 34 71 37Q50 40 48 67Q45 40 24 37Q45 34 48 7Z" />
        <path d="M25 0Q26 12 37 15Q26 17 25 29Q23 17 13 15Q23 12 25 0Z" />
        <path d="M19 36Q20 53 35 55Q20 58 19 76Q17 58 3 55Q17 53 19 36Z" />
      </g>
    </Glyph>
  );
}

function HoldingTears() {
  return (
    <Glyph label="🥹" small>
      <Face />
      <path d="M12 26Q20 25 26 18M50 18Q56 25 64 26" fill="none" stroke="#7a4d12" strokeWidth="3" strokeLinecap="round" />
      <circle cx="23" cy="39" r="11" fill="#2c2a2b" />
      <circle cx="53" cy="39" r="11" fill="#2c2a2b" />
      <circle cx="21" cy="35" r="7" fill="#e2e2e2" />
      <circle cx="51" cy="35" r="7" fill="#e2e2e2" />
      <circle cx="28" cy="42" r="2" fill="#fff" />
      <circle cx="58" cy="42" r="2" fill="#fff" />
      <path d="M13 44Q23 48 34 44Q34 52 23 52T13 44ZM43 44Q53 48 64 44Q64 52 53 52T43 44Z" fill="#43c9e4" />
      <path d="M28 58Q38 63 48 58Q46 65 38 65T28 58Z" fill="#6b410c" />
    </Glyph>
  );
}

/* ---------- Chat pieces ---------- */

function Ticks() {
  return (
    <svg role="img" aria-label="Entregado" viewBox="0 0 50 32" className="h-8 w-[50px]" fill="none" stroke="#9dbbaf" strokeWidth="4" strokeLinecap="round" strokeLinejoin="round">
      <path d="M3 18 13 28 33 2M24 25 28 28 48 2" />
    </svg>
  );
}

function OutTail() {
  return (
    <svg aria-hidden="true" viewBox="0 0 23 34" className="absolute top-0 -right-[21px] h-[34px] w-[23px]" fill="#144d37">
      <path d="M0 0H17Q23 1 22.500 7Q22 10 2 33L0 34Z" />
    </svg>
  );
}

function InTail() {
  return (
    <svg aria-hidden="true" viewBox="0 0 23 32" className="absolute top-0 -left-5 h-8 w-[23px]" fill="#1f272a">
      <path d="M23 0H1Q-1 4 2 9L20 31H23Z" />
    </svg>
  );
}

function Bubble({ out, tail, time, className, children }: { out?: boolean; tail?: boolean; time: string; className: string; children: ReactNode }) {
  const side = out ? 'ml-auto mr-[51px] bg-[#144d37]' : 'ml-[51px] bg-[#1f272a]';
  const corner = !tail ? 'rounded-[34px]' : out ? 'rounded-[34px] rounded-tr-none' : 'rounded-[34px] rounded-tl-none';
  return (
    <article className={`relative grid ${side} ${corner} ${className}`}>
      {tail && (out ? <OutTail /> : <InTail />)}
      <div className={`col-start-1 row-start-1 px-[30px] pt-[19px] ${out ? 'pb-[22px]' : 'pb-[23px]'}`}>{children}</div>
      <div
        className={`col-start-1 row-start-1 flex items-center gap-3 self-end justify-self-end text-[39px] leading-12 ${
          out ? 'mr-[26px] mb-2 text-[#9dbbaf]' : 'mr-6 mb-1.5 text-[#a0a4a6]'
        }`}
      >
        <time>{time}</time>
        {out && <Ticks />}
      </div>
    </article>
  );
}

function Reaction({ label, children }: { label: string; children: ReactNode }) {
  return (
    <button
      type="button"
      aria-label={label}
      className="absolute top-full left-[75px] -mt-3 flex h-[82px] w-24 items-center justify-center rounded-[41px] border-3 border-[#0a0f13] bg-[#1f272a] pt-1"
    >
      {children}
    </button>
  );
}

export default function App() {
  return (
    <div className="relative flex h-screen flex-col overflow-hidden bg-[#0a0f13] font-[Roboto,sans-serif] text-[#f7f8fa]">
      <Gradients />
      <Wallpaper />

      <header className="relative h-[33px] shrink-0 overflow-hidden border-b-2 border-[#15191d] bg-[#0a0f13]">
        <div className="-mt-[107px] ml-[154px] h-28 w-28 rounded-full bg-[#b5aea9]" />
      </header>

      <main className="relative flex-1 overflow-hidden text-[51px] leading-[61px]">
        <div className="ml-[53px] -mt-12 h-[61px] w-[520px] rounded-[34px] bg-[#1f272a]" />

        <div className="relative mt-2">
          <article className="ml-[51px] grid w-[818px] rounded-[34px] bg-[#1f272a]">
            <div className="col-start-1 row-start-1 flex">
              <div className="mt-4 mb-[34px] h-[133px] w-[633px] rounded-[62px] bg-[#222222]" />
              <div className="flex pt-[19px]">
                <InLove />
                <InLove />
              </div>
            </div>
            <time className="col-start-1 row-start-1 mr-6 mb-[5px] self-end justify-self-end text-[39px] leading-12 text-[#a0a4a6]">22:20</time>
          </article>
          <Reaction label="Reacción ✨">
            <Sparkles />
          </Reaction>
        </div>

        <Bubble out tail time="22:21" className="mt-[101px] w-[698px]">
          <p className="whitespace-nowrap">
            Ma grazieeee
            <Heart tone="violet" />
            <Heart tone="red" />
          </p>
        </Bubble>

        <div className="mx-auto my-[33px] flex h-[83px] w-[490px] items-center justify-center rounded-[26px] bg-[#12171b] pt-1 text-[41px] leading-12 font-medium text-[#8b9297]">
          <span>9 de diciembre de 2025</span>
        </div>

        <Bubble out tail time="13:00" className="w-[858px]">
          <p>
            Risolto! Se inserisci di nuovo la tua mail dovrebbe andare tutto liscio{' '}
            <span className="whitespace-nowrap">
              <Kiss />
              <Kiss />
            </span>
          </p>
        </Bubble>

        <Bubble tail time="14:58" className="mt-[31px] w-[594px]">
          <p>Ora provo subito !</p>
        </Bubble>

        <div className="relative mt-2">
          <Bubble time="15:49" className="w-[858px]">
            <p>
              Fatto! <Smiling /> Comunque il ritiro per me è stata la svolta... E voglio sicuramente continuare ad approfondire quindi dopo la fine del percorso non ti libererai di me{' '}
              <span className="whitespace-nowrap">
                <Joy />
                <Joy />
              </span>
            </p>
          </Bubble>
          <Reaction label="Reacción 🥹">
            <HoldingTears />
          </Reaction>
        </div>

        <div className="relative mt-[100px]">
          <article className="relative mr-[51px] ml-auto flex h-[300px] w-[858px] flex-col rounded-tl-[34px] bg-[#144d37]">
            <OutTail />
            <div className="flex justify-end pt-[19px] pr-[131px]">
              <Rofl />
              <Rofl />
            </div>
            <div className="mt-auto ml-[381px] h-1.5 w-[6px] shrink-0 bg-[#f7f8fa]" />
            <div className="mt-1 flex h-2 shrink-0 items-start overflow-hidden pl-7">
              <RaisedHands />
              <RaisedHands />
            </div>
          </article>
          <div className="absolute top-2 left-0 h-[274px] w-[812px] rounded-r-[120px] bg-[#222222]" />
        </div>
      </main>

      <button
        type="button"
        aria-label="Ir al final"
        className="absolute right-9 bottom-[101px] flex h-24 w-24 items-center justify-center rounded-full bg-[#28333b] shadow-lg shadow-black/50"
      >
        <svg viewBox="0 0 40 44" className="mt-1.5 h-11 w-10" fill="none" stroke="#8f979c" strokeWidth="6" strokeLinecap="round" strokeLinejoin="round">
          <path d="M6 6 20 20 34 6M6 24 20 38 34 24" />
        </svg>
      </button>

      <footer className="relative flex h-[53px] shrink-0 items-start gap-3 overflow-hidden pr-[13px] pl-[15px]">
        <div className="mt-3 flex h-[140px] flex-1 items-start rounded-[70px] bg-[#1f272a] px-12 pt-[31px]">
          <button type="button" aria-label="Emoji" className="mt-2">
            <svg viewBox="0 0 44 44" className="h-11 w-11" fill="none" stroke="#8b9297" strokeWidth="5">
              <circle cx="22" cy="22" r="19" />
            </svg>
          </button>
          <input aria-label="Mensaje" className="ml-12 h-16 min-w-0 flex-1 border-l-6 border-[#21c063] bg-transparent outline-none" />
          <button type="button" aria-label="Adjuntar" className="mt-2 mr-[150px]">
            <svg viewBox="0 0 44 44" className="h-11 w-11" fill="none" stroke="#8b9297" strokeWidth="5">
              <path d="M12 14Q22-8 32 14V44" />
            </svg>
          </button>
        </div>
        <button type="button" aria-label="Grabar mensaje de voz" className="mt-2.5 flex h-36 w-36 shrink-0 items-start justify-center rounded-full bg-[#21c063] pt-[42px]">
          <svg viewBox="0 0 24 60" className="h-[60px] w-6" fill="#0a0f13">
            <rect x="4" y="0" width="16" height="40" rx="8" />
          </svg>
        </button>
      </footer>
    </div>
  );
}
